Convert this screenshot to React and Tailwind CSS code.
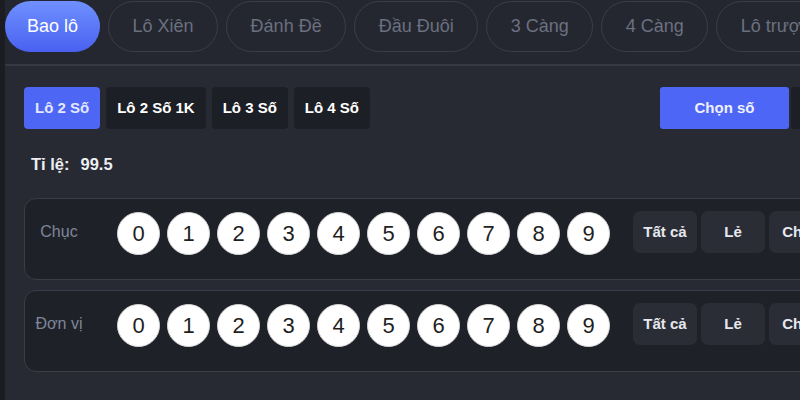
import React from "react";

const tabs = ["Lô Xiên", "Đánh Đề", "Đầu Đuôi", "3 Càng", "4 Càng", "Lô trượt", "Đặc biệt"];
const subTabs = ["Lô 2 Số 1K", "Lô 3 Số", "Lô 4 Số"];
const digits = [0, 1, 2, 3, 4, 5, 6, 7, 8, 9];
const actions = ["Tất cả", "Lẻ", "Chẵn", "Tài", "Xỉu", "Xóa"];

function Row({ label }) {
  return (
    <div className="flex items-center w-[980px] border border-[#393d47] rounded-[12px] bg-[#1f2129] pt-[12px] pb-[24px]">
      <div className="w-[68px] shrink-0 text-center text-[16px] leading-[19px] text-[#7f8698] mb-[3px]">{label}</div>
      <div className="flex gap-[7px] ml-[24px]">
        {digits.map((d) => (
          <div
            key={d}
            className="w-[43px] h-[43px] rounded-full bg-white border border-[#d9d9d9] flex items-center justify-center text-[22px] text-[#1f1f1f]"
          >
            {d}
          </div>
        ))}
      </div>
      <div className="flex gap-[4px] ml-[23px]">
        {actions.map((a) => (
          <div
            key={a}
            className="w-[64px] h-[42px] rounded-[7px] bg-[#2a2d36] flex items-center justify-center text-[15px] font-bold text-[#e6e8ee] mb-[2px]"
          >
            {a}
          </div>
        ))}
      </div>
    </div>
  );
}

export default function App() {
  return (
    <div className="w-[800px] h-[400px] overflow-hidden flex bg-[#272a33] font-['Liberation_Sans',Arial,sans-serif]">
      <div className="w-[5px] shrink-0 bg-[#1b1d23]" />
      <div className="flex-1 min-w-0 flex flex-col">
        <div className="h-[64px] shrink-0 bg-[#24272f] flex items-start gap-[8px] pt-[1px] whitespace-nowrap overflow-hidden">
          <div className="h-[51px] shrink-0 px-[22px] rounded-full bg-gradient-to-b from-[#7090ff] to-[#4a60f0] flex items-center text-[18px] text-white">
            Bao lô
          </div>
          {tabs.map((t) => (
            <div
              key={t}
              className="h-[51px] shrink-0 px-[23.5px] rounded-full border border-[#3b3e48] flex items-center text-[18px] text-[#6b7080]"
            >
              {t}
            </div>
          ))}
        </div>
        <div className="h-[2px] shrink-0 bg-[#363943]" />
        <div className="pl-[19px] pt-[21px] whitespace-nowrap">
          <div className="flex items-center">
            <div className="flex gap-[6px]">
              <div className="h-[42px] px-[11px] rounded-[4px] bg-[#4d66f4] flex items-center text-[15px] font-bold text-[#e3e7ff]">
                Lô 2 Số
              </div>
              {subTabs.map((s) => (
                <div
                  key={s}
                  className="h-[42px] px-[11px] rounded-[4px] bg-[#1d1f26] flex items-center text-[15px] font-bold text-white"
                >
                  {s}
                </div>
              ))}
            </div>
            <div className="flex gap-[2px] ml-[290px]">
              <div className="w-[129px] h-[42px] rounded-[3px] bg-[#4e66f5] flex items-center justify-center text-[15px] font-bold text-[#eef0ff]">
                Chọn số
              </div>
              <div className="w-[129px] h-[42px] rounded-[3px] bg-[#1d1f26] flex items-center justify-center text-[15px] font-bold text-white">
                Nhập số
              </div>
            </div>
          </div>
          <div className="mt-[26px] pl-[7px] text-[16.5px] leading-[19px] font-bold text-[#eceef2]">
            Tỉ lệ:<span className="ml-[11px]">99.5</span>
          </div>
          <div className="mt-[24px]">
            <Row label="Chục" />
          </div>
          <div className="mt-[10px]">
            <Row label="Đơn vị" />
          </div>
        </div>
      </div>
    </div>
  );
}
